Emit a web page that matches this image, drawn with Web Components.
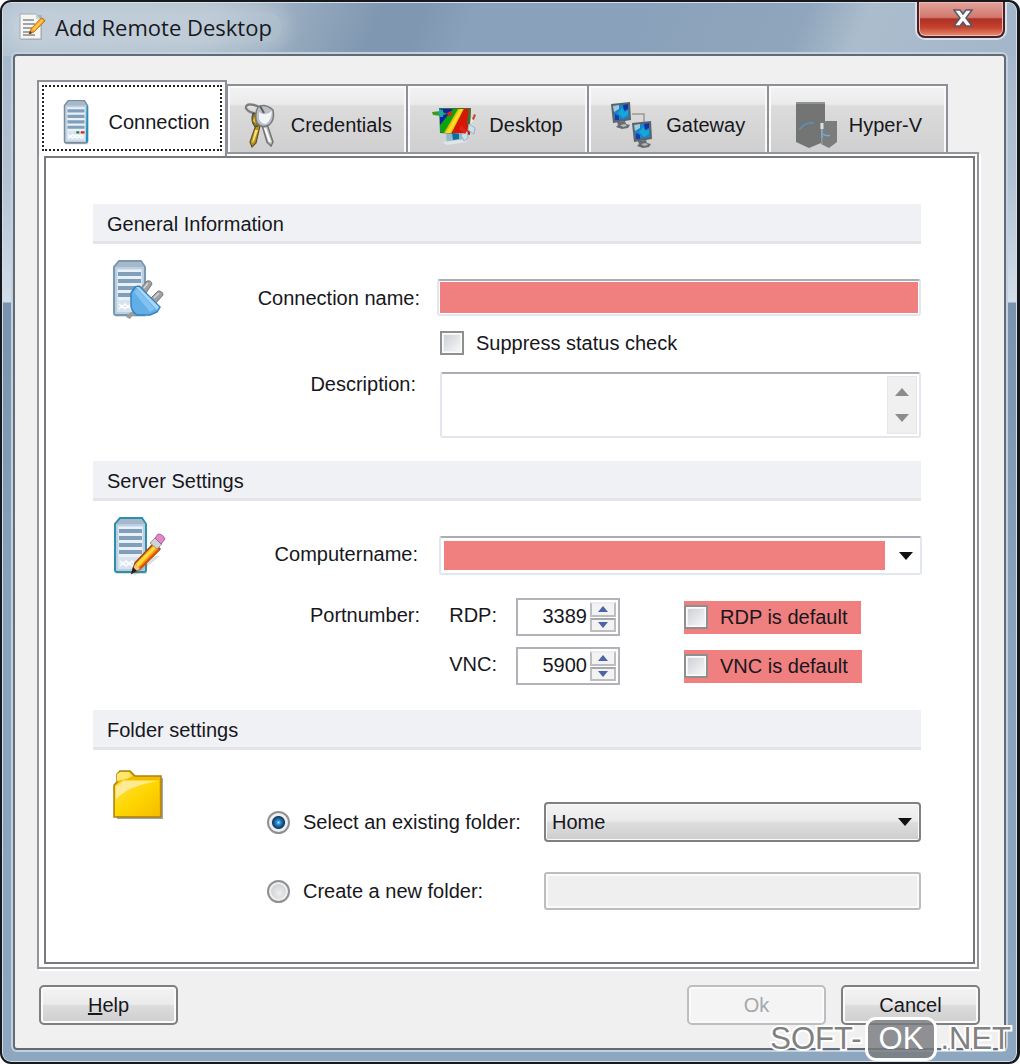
<!DOCTYPE html>
<html lang="en">
<head>
<meta charset="utf-8">
<title>Add Remote Desktop</title>
<style>
  html, body { margin: 0; }
  body { font: 20px/24px "Liberation Sans", Arial, sans-serif; color: #17171c; background: #fff; }
</style>
</head>
<body>
<aero-window caption="Add Remote Desktop">
  <tab-strip slot="tabs">
    <tab-item selected><pic-icon name="server-tab"></pic-icon>Connection</tab-item>
    <tab-item><pic-icon name="keys"></pic-icon>Credentials</tab-item>
    <tab-item><pic-icon name="desktop"></pic-icon>Desktop</tab-item>
    <tab-item><pic-icon name="gateway"></pic-icon>Gateway</tab-item>
    <tab-item><pic-icon name="hyperv"></pic-icon>Hyper-V</tab-item>
  </tab-strip>
  <tab-panel>
    <form-section heading="General Information">
      <pic-icon slot="icon" name="server-plug"></pic-icon>
      <connection-fields></connection-fields>
    </form-section>
    <form-section heading="Server Settings">
      <pic-icon slot="icon" name="server-edit"></pic-icon>
      <server-fields></server-fields>
    </form-section>
    <form-section heading="Folder settings" class="wide">
      <pic-icon slot="icon" name="folder"></pic-icon>
      <folder-fields></folder-fields>
    </form-section>
  </tab-panel>
  <push-button slot="help"><u>H</u>elp</push-button>
  <push-button slot="actions" disabled>Ok</push-button>
  <push-button slot="actions">Cancel</push-button>
</aero-window>
<site-mark></site-mark>

<script>
const define = (name, render) => customElements.define(name, class extends HTMLElement {
  constructor() {
    super();
    this.attachShadow({ mode: 'open' });
  }
  connectedCallback() {
    if (this.shadowRoot.firstChild) return;
    const t = document.createElement('template');
    t.innerHTML = '<style>*{box-sizing:border-box}:host{box-sizing:border-box}</style>' + render(this);
    this.shadowRoot.append(t.content.cloneNode(true));
  }
});

/* ---------- icons ---------- */
const tower = (edge) => `
  <path d="M5 4l3-3h21l4 3v50H2V7z" fill="#6f7f8c" opacity=".25" transform="translate(1 3)"/>
  <path d="M2 7l5-6h22l4 6v46q0 2-2 2H4q-2 0-2-2z" fill="#b9cfe2" stroke="${edge}" stroke-width="2"/>
  <path d="M3 7l5-5h20l4 5z" fill="#a5b9ca"/>
  <path d="M5 9h25v43H5z" fill="#d7e4ef"/>
  <path d="M6 10h23v30H6z" fill="#e9f1f8"/>
  <path d="M6 12h23v4H6zM6 19h23v4H6zM6 26h23v4H6zM6 33h23v4H6z" fill="#819fbb"/>
  <path d="M7 44l3 3 3-3 3 3 3-3 3 3 3-3 3 3M7 49l3-3 3 3 3-3 3 3 3-3 3 3 3-3" fill="none" stroke="#fff" stroke-width="1.5"/>`;
const monitor = `
  <path d="M1 2l19-2 1 18-18 3z" fill="#59646c"/>
  <path d="M3 4l15-2 1 14-14 2z" fill="#1685c9"/>
  <path d="M3 4l6-1v4l-5 3z" fill="#a8c6d4"/>
  <path d="M13 3l5-1v5l-4 2z" fill="#1630a0"/>
  <path d="M5 12l4 2v4l-4 0z" fill="#123db5"/>
  <path d="M8 11l4-5 3 4 3-2v5l-5 3z" fill="#16a6d9"/>
  <path d="M7 20l8-1 1 3 4 1-2 3-6 1-6-2 2-2z" fill="#656c70"/>
  <path d="M10 23l5-1 2 2-4 1z" fill="#b5babd"/>`;
const icons = {
  'title': [28, 28, `
    <path d="M2 2h21v25H2z" fill="#91979d" opacity=".5"/>
    <path d="M1 1h16l5 5v20H1z" fill="#f6f6f5" stroke="#a5a9ac"/>
    <path d="M17 1v5h5z" fill="#cbd0d4"/>
    <path d="M4 7h11M4 11h12M4 15h10M4 19h7M4 22h12" stroke="#85898c" stroke-width="1.5"/>
    <path d="M10 21l2-5L22 5q3 0 4 3L15 19z" fill="#f59b1c" stroke="#b96a12" stroke-width=".8"/>
    <path d="M13 16l10-10 1 2-9 10z" fill="#ffc84e"/><path d="M10 21l1-3 2 2z" fill="#3b3128"/>`],
  'server-tab': [36, 46, `<g transform="translate(2 1) scale(.74 .78)">${tower('#7d8b98')}
    <path d="M32 8h2v46h-3z" fill="#1e93b8"/><path d="M18 40h4v3h-4z" fill="#207d3c"/><path d="M24 40h5v3h-5z" fill="#d8261d"/></g>`],
  'keys': [36, 46, `
    <path d="M14 12Q4 10 3 6q0-5 8-3 8 2 9 8" fill="none" stroke="#7d7d7c" stroke-width="2.5"/>
    <path d="M4 6q1-3 7-1" fill="none" stroke="#e8e8e6"/>
    <path d="M14 20l3 4-4 17-4 4-2-5z" fill="#bd9416" stroke="#625228" stroke-width="1.2"/>
    <path d="M12 28l-3 13 2-2 4-11z" fill="#f6e07a"/><path d="M10 11q-3 8 2 14l6-2-2-10z" fill="#8a701f" stroke="#44433f"/>
    <path d="M11 14l-1 5 3 3z" fill="#f0c419"/>
    <path d="M19 23l5-1 2 6 4 12-2 4-4-4z" fill="#c4c4c3" stroke="#747474" stroke-width="1.5"/>
    <path d="M22 26l5 14" stroke="#fff" stroke-width="2"/>
    <path d="M15 5q7-4 15 3 2 10-4 15-7 4-12-2-3-9 1-16z" fill="#bbc0c4" stroke="#777a7d" stroke-width="1.5"/>
    <path d="M16 10q6 5 13-1-1 10-6 13-5 0-7-5z" fill="#f2f4f5"/><path d="M17 4l4 7" stroke="#5e6060" stroke-width="2"/>`],
  'desktop': [45, 40, `
    <path d="M7 3h32l-1 27-30-2z" fill="#3e6f2c"/>
    <path d="M8 4h13l-8 15-5 3z" fill="#1020a0"/>
    <path d="M21 4h5L14 27H8v-7z" fill="#0ba312"/>
    <path d="M26 4h6L20 28h-8z" fill="#e9bd08"/>
    <path d="M32 4h5l-2 13 3 12H19z" fill="#d51708"/>
    <path d="M28 4L14 28h4L31 4z" fill="#ffdc21"/>
    <path d="M0 7l9-1 6 3-6 2-8-1z" fill="#3f9a1d"/><path d="M7 4l4 1v7H7z" fill="#13a6c0"/>
    <path d="M15 8l4-2 1 4-4 1z" fill="#e22117"/>
    <path d="M14 29l17-1 3 8-19 3z" fill="#8fbace"/><path d="M20 28l7 1v5l-6 1z" fill="#0b6f98"/>
    <path d="M10 37l23-3 2 3-20 3z" fill="#dfe5e8"/>
    <path d="M29 30l6-4 1 7-4 3zM37 19l6 4-1 6-6-4z" fill="#cbe0ed" stroke="#9db4c2"/>
    <path d="M29 20l6 6-2 3-6-5z" fill="#e22512"/><path d="M42 9l2 1-2 5-2-1z" fill="#c84a33"/><path d="M39 13l2 3-3 4z" fill="#edf1f3"/>`],
  'gateway': [44, 46, `
    <path d="M22 12h12v10" fill="none" stroke="#999" stroke-width="1.5"/>
    <g>${monitor}</g><g transform="translate(21 19)">${monitor}</g>`],
  'hyperv': [44, 48, `
    <path d="M3 1h29v36l-4 5-12 5-13-6z" fill="#737474"/><path d="M28 22l5-2h11v21l-8 6-8-4z" fill="#7b7c7c"/>
    <path d="M3 1h29v2H3z" fill="#929393"/><path d="M28 22l1 21" stroke="#a0a1a1"/>
    <path d="M6 29q7-9 15-7" fill="none" stroke="#5992bb" stroke-width="1.5"/>
    <path d="M29 22v6" stroke="#d5e2ea" stroke-width="3"/>
    <path d="M29 28v9M30 33q4 3 7 1" fill="none" stroke="#78acd0" stroke-width="1.5"/>`],
  'server-plug': [54, 60, `<g transform="translate(0 1)">${tower('#7b98af')}</g>
    <path d="M14 58q3-5 9-6l3 3q-5 0-8 5z" fill="#9a9c9d"/>
    <path d="M29 29l6-7q4-1 5 3l-6 9zM38 40l8-8q5 0 5 4l-8 9z" fill="#a0a1a2" stroke="#737576"/>
    <path d="M32 29l4-5M42 39l5-5" stroke="#d5d6d6" stroke-width="1.5"/>
    <path d="M19 34l4-6 4-1 21 21-3 5-7 3H25q-6-4-6-10z" fill="#62aee7" stroke="#3682bd" stroke-width="1.5"/>
    <path d="M24 28l3 0 20 20-2 3z" fill="#a6d8fa"/><path d="M22 33l3-3 18 20-5 3z" fill="#82c2f0"/>`],
  'server-edit': [54, 60, `<g transform="translate(1 1)">${tower('#2d8fa9')}</g>
    <path d="M20 59l23-19 5 0-22 18z" fill="#777" opacity=".25"/>
    <path d="M20 57l3-10 19-20 6 6-20 20z" fill="#f4a20b" stroke="#a54216" stroke-width="1.5"/>
    <path d="M24 48l18-18 2 2-18 19z" fill="#ffdc3e"/><path d="M27 52l19-19 2 1-20 20z" fill="#da4d11"/>
    <path d="M20 57l3-9 5 5z" fill="#edc98e"/><path d="M19 58l2-7 4 4z" fill="#26201d"/>
    <path d="M38 27l5-5 7 6-5 5z" fill="#d1d2d4" stroke="#888" stroke-width=".8"/><path d="M43 22l3-4q5 0 7 5l-4 5z" fill="#dc8ac8" stroke="#a64396" stroke-width=".8"/>`],
  'folder': [54, 50, `<defs><linearGradient id="fg" x1="0" y1="0" x2="1" y2="1">
      <stop offset="0" stop-color="#ffe052"/><stop offset=".5" stop-color="#ffd600"/><stop offset="1" stop-color="#f5bd00"/></linearGradient></defs>
    <path d="M5 16L51 8v41H5z" fill="#4b4b4b" opacity=".5"/>
    <path d="M2 47V15l3-3V4l3-3h10l5 5h26v41z" fill="#f1bd00" stroke="#a9830d" stroke-width="1.5"/>
    <path d="M5 11V4l3-2h9l3 4q-4 3-11 4z" fill="#ffe66d"/>
    <path d="M3 46V16l8-6h36v36z" fill="url(#fg)"/>
    <path d="M4 29V17l8-6h34Q18 15 4 29z" fill="#ffedb0" opacity=".8"/>`]
};
define('pic-icon', (el) => {
  const [w, h, art] = icons[el.getAttribute('name')];
  return `<style>:host{display:block;flex:none}svg{display:block}</style>
    <svg width="${w}" height="${h}" viewBox="0 0 ${w} ${h}" aria-hidden="true">${art}</svg>`;
});

/* ---------- window frame ---------- */
define('aero-window', (el) => `<style>
  :host { display: flex; flex-direction: column; min-height: 100vh; padding: 0 11px 12px; border: 2px solid #17191d; border-right-width: 3px;
    border-radius: 11px; overflow: hidden;
    box-shadow: inset 0 0 0 1px #d3dfe9;
    background:
      linear-gradient(90deg, #b4c4d2 0, #b4c4d200 27%) 0 0 / 100% 54px no-repeat,
      linear-gradient(112deg, #b0c0ce 0 20%, #7f97b0 37% 41%, #89a1ba 46% 62%, #90a6bc 78%, #abbdcd 84%, #a3b6c9 100%) 0 0 / 100% 54px no-repeat,
      linear-gradient(#a6b8cb 54px, #b2c3d3 180px, #d2deea 300px, #7992ad 301px, #88a2bc 600px, #8da7c1); }
  header { display: flex; align-items: flex-start; justify-content: space-between; height: 52px; padding-right: 1px; }
  h1 { display: flex; align-items: center; gap: 8px; margin: 10px 0 0; padding: 0 10px 0 6px; font: 22px/30px "Open Sans", "Noto Sans", sans-serif; color: #17191d;
    border-radius: 20px; background: #ffffff30; box-shadow: 0 0 16px 8px #ffffff30; }
  .close { display: grid; place-items: center; width: 88px; height: 36px; margin: 0; padding: 0 0 3px 4px; border: 2px solid #49202a; border-top: 0; border-radius: 0 0 8px 8px;
    background: linear-gradient(#e3a39b, #d1786e 45%, #ab3026 50%, #c5432d 75%, #e58e75); box-shadow: inset 0 0 0 1px #f0b9ad, 0 0 0 2px #d8e2ea; }
  .client { flex: 1; display: flex; flex-direction: column; padding: 24px 24px 23px; background: #f0f0f0; border: 2px solid #616c78; border-radius: 4px; box-shadow: 0 0 0 2px #c3d1de; }
  footer { display: flex; gap: 15px; justify-content: flex-end; padding-top: 16px; }
  slot[name=help] { display: block; margin-right: auto; }
</style>
<header>
  <h1><pic-icon name="title"></pic-icon>${el.getAttribute('caption')}</h1>
  <button class="close" aria-label="Close"><svg width="20" height="18" viewBox="0 0 20 18"><path d="M1 1h6l3 4 3-4h6l-6 8 6 8h-6l-3-4-3 4H1l6-8z" fill="#fafafa" stroke="#555a66" stroke-width="1.5"/></svg></button>
</header>
<main class="client">
  <slot name="tabs"></slot>
  <slot></slot>
  <footer><slot name="help"></slot><slot name="actions"></slot></footer>
</main>`);

define('tab-strip', () => `<style>
  :host { display: flex; align-items: flex-end; padding: 0 32px 0 0; position: relative; z-index: 1; margin-left: -2px; }
</style><slot></slot>`);
define('tab-item', (el) => {
  const on = el.hasAttribute('selected');
  return `<style>
  :host { display: flex; flex: 180 1 0; height: 68px; }
  :host([selected]) { flex-grow: 190; height: 76px; margin-bottom: -4px; }
  button { flex: 1; display: flex; align-items: center; justify-content: center; gap: 12px; margin: 0; padding: 12px 0 0; font: inherit; color: inherit;
    border: 2px solid #8d9097; border-left-width: 1px; border-right-width: 1px; border-bottom: 0; border-radius: 0; box-shadow: inset 2px 2px #fafafa, inset -2px 0 #f8f8f8;
    background: linear-gradient(#f3f3f3, #ebebeb 18px, #dcdcdc 20px, #cfcfcf); }
  :host([selected]) button { background: #fff; border-width: 2px 2px 0; padding: 5px 0 0 6px; outline: 2px dotted #222; outline-offset: -7px; }
  :host(:last-child) button { border-right-width: 2px; }
</style><button role="tab" aria-selected="${on}"><slot></slot></button>`;
});
define('tab-panel', () => `<style>
  :host { display: flex; flex: 1; flex-direction: column; margin: 0 1px 0 -2px; padding: 2px 2px 3px 5px; background: #fff; border: 2px solid #92959b; box-shadow: 2px 2px #fff; }
  .page { flex: 1; display: flex; flex-direction: column; gap: 23px; padding: 46px 52px 50px 47px; border: 2px solid #77797c; }
</style><div class="page" role="tabpanel"><slot></slot></div>`);

define('push-button', (el) => `<style>
  :host { display: block; }
  button { width: 139px; height: 40px; margin: 0; padding: 0; font: inherit; color: inherit; border: 2px solid #7e7f82; border-radius: 5px;
    background: linear-gradient(#f3f3f3, #ebebeb 48%, #dcdcdc 52%, #cecece); box-shadow: inset 0 0 0 2px #fafafa; }
  button:disabled { color: #a4a7ac; border-color: #bbbfc4; background: #f4f4f4; }
</style><button type="button" ${el.hasAttribute('disabled') ? 'disabled' : ''}><slot></slot></button>`);

/* ---------- form parts ---------- */
define('form-section', (el) => `<style>
  :host { display: block; --lead: 35px; }
  :host(.wide) { --lead: 52px; }
  h2 { margin: 0; padding: 8px 14px 5px; height: 40px; font: inherit; background: #f0f1f5; border-bottom: 3px solid #e3e4e8; }
  .body { display: grid; grid-template-columns: 54px minmax(0, 1fr); padding-left: 19px; }
  slot[name=icon] { display: block; padding-top: 15px; }
  .fields { padding-top: var(--lead); }
  :host(.wide) slot[name=icon] { padding-top: 20px; }
</style>
<section><h2>${el.getAttribute('heading')}</h2>
<div class="body"><slot name="icon"></slot><div class="fields"><slot></slot></div></div></section>`);

const formCss = `
  :host { display: block; }
  .row { display: grid; grid-template-columns: 254px minmax(0, 1fr); column-gap: 17px; }
  .row > label:first-child, .name { text-align: right; }
  input, textarea, select { font: inherit; color: inherit; margin: 0; min-width: 0; }
  input[type=checkbox] { appearance: none; flex: none; width: 24px; height: 24px; border: 2px solid #8e8f8f;
    background: linear-gradient(135deg, #cdd1d6, #f6f6f6) content-box, #f4f4f4; padding: 2px; box-shadow: inset 0 0 0 1px #fbfbfb; }
  .check { display: flex; align-items: center; gap: 12px; }
  .box { border: 2px solid #e1e7ed; border-top-color: #abadb5; border-radius: 3px; background: #fff; }`;

define('connection-fields', () => `<style>${formCss}
  .name { padding: 7px 0; }
  #conn { display: block; width: 100%; height: 37px; padding: 1px; background: linear-gradient(#f08080, #f08080) content-box, #fff; }
  .check { margin: 14px 0 17px; padding-left: 274px; height: 24px; }
  .memo { display: flex; height: 66px; margin-left: 3px; }
  textarea { flex: 1; border: 0; padding: 4px; resize: none; background: none; overflow: hidden; }
  .bar { display: flex; flex-direction: column; justify-content: space-between; width: 30px; margin: 2px; padding: 9px 0; background: #f0f0f0; border: 1px solid #e6e6e6; }
  .bar button { display: grid; place-items: center; padding: 0; border: 0; background: none; height: 12px; }
  .desc { padding-right: 4px; }
</style>
<div class="row"><label class="name" for="conn">Connection name:</label><input id="conn" class="box" type="text"></div>
<div class="check"><input id="sup" type="checkbox"><label for="sup">Suppress status check</label></div>
<div class="row"><label class="desc" for="desc">Description:</label>
  <div class="box memo"><textarea id="desc"></textarea>
    <div class="bar"><button aria-label="Scroll up"><svg width="14" height="8"><path d="M0 8l7-8 7 8z" fill="#8b8c8f"/></svg></button>
    <button aria-label="Scroll down"><svg width="14" height="8"><path d="M0 0l7 8 7-8z" fill="#8b8c8f"/></svg></button></div></div></div>`);

const spin = (id, value) => `<span class="spin"><input id="${id}" type="text" inputmode="numeric" value="${value}">
  <span class="arrows"><button aria-label="Increase"><svg width="10" height="6"><path d="M0 6l5-6 5 6z" fill="#4c63a4"/></svg></button>
  <button aria-label="Decrease"><svg width="10" height="6"><path d="M0 0l5 6 5-6z" fill="#4c63a4"/></svg></button></span></span>`;
define('server-fields', () => `<style>${formCss}
  .name { padding: 6px 2px 6px 0; }
  .combo { display: flex; height: 39px; padding: 3px; margin-left: 2px; margin-right: -1px; }
  .combo input { flex: 1; border: 0; padding: 0; background: #f08080; }
  .combo button { display: grid; place-items: center; width: 32px; border: 0; padding: 0 0 0 9px; background: none; }
  .ports { display: grid; grid-template-columns: 254px 58px 104px auto; column-gap: 19px; row-gap: 11px; padding: 23px 0 2px; justify-content: start; }
  .ports > label, .ports > span.name { padding: 5px 0; }
  .ports .proto { text-align: right; grid-column: 2; }
  .spin { display: flex; height: 38px; border: 2px solid #b1b3b8; background: #fff; padding: 2px; }
  .spin input { flex: 1; width: 10px; border: 0; padding: 0 3px 3px 0; text-align: right; background: none; }
  .arrows { display: flex; flex-direction: column; gap: 1px; width: 26px; }
  .arrows button { flex: 1; display: grid; place-items: center; border: 2px solid #bdbec1; border-top-color: #ededed; padding: 0; background: #f3f3f3; min-height: 0; }
  .arrows button + button { border-top-color: #a6a7aa; }
  .check { justify-self: start; align-self: center; height: 33px; margin-left: 45px; padding-right: 14px; background: #f08080; }
</style>
<div class="row"><label class="name" for="host">Computername:</label>
  <div class="box combo"><input id="host" type="text"><button aria-label="Show computers"><svg width="14" height="8"><path d="M0 0h14L7 8z" fill="#111"/></svg></button></div></div>
<div class="ports">
  <span class="name">Portnumber:</span><label class="proto" for="rdp">RDP:</label>${spin('rdp', '3389')}
  <div class="check"><input id="rd" type="checkbox"><label for="rd">RDP is default</label></div>
  <label class="proto" for="vnc">VNC:</label>${spin('vnc', '5900')}
  <div class="check"><input id="vd" type="checkbox"><label for="vd">VNC is default</label></div>
</div>`);

define('folder-fields', () => `<style>${formCss}
  .grid { display: grid; grid-template-columns: 277px minmax(0, 1fr); row-gap: 30px; padding-left: 101px; }
  .opt { display: flex; align-items: center; gap: 13px; white-space: nowrap; }
  input[type=radio] { appearance: none; flex: none; width: 23px; height: 23px; border: 2px solid #909193; border-radius: 50%; box-shadow: inset 0 0 0 2px #f1f1f1;
    background: radial-gradient(circle at 55% 58%, #eeeeef, #c6c8cb 80%); }
  input[type=radio]:checked { background: radial-gradient(circle at 50% 50%, #a9e4fb 0, #2795d5 2px, #144b80 5px, #17385d 6px, #e5e8eb 7px); }
  .pick { display: grid; }
  select, .pick svg { grid-area: 1 / 1; }
  select { appearance: none; height: 40px; width: 100%; padding: 0 6px; border: 2px solid #808184; border-radius: 4px;
    background: linear-gradient(#f3f3f3, #ebebeb 46%, #dddddd 52%, #cdcdcd); box-shadow: inset 0 0 0 1px #fafafa; }
  .pick svg { place-self: center end; margin-right: 9px; pointer-events: none; }
  .new { height: 38px; border: 2px solid #bcbdbe; border-radius: 3px; background: #efefef; box-shadow: inset 0 0 0 2px #fafafa; }
</style>
<div class="grid">
  <div class="opt"><input type="radio" name="folder" id="old" checked><label for="old">Select an existing folder:</label></div>
  <div class="pick"><select aria-label="Existing folder"><option>Home</option></select><svg width="14" height="8"><path d="M0 0h14L7 8z" fill="#111"/></svg></div>
  <div class="opt"><input type="radio" name="folder" id="new"><label for="new">Create a new folder:</label></div>
  <input class="new" type="text" aria-label="New folder name" disabled>
</div>`);

define('site-mark', () => `<style>
  :host { position: absolute; right: 9px; bottom: 3px; display: flex; align-items: center; gap: 3px; font-size: 31px; line-height: 38px; color: #818181; pointer-events: none; }
  @media (min-height: 0) { :host { bottom: auto; top: 1017px; } }
  span { -webkit-text-stroke: 4px #fff; paint-order: stroke fill; }
  b { font-weight: 400; color: #fff; padding: 0 11px; border: 3px solid #fff; border-radius: 11px; background: #77797dd0; }
</style><span>SOFT-</span><b>OK</b><span>.NET</span>`);
</script>
</body>
</html>
